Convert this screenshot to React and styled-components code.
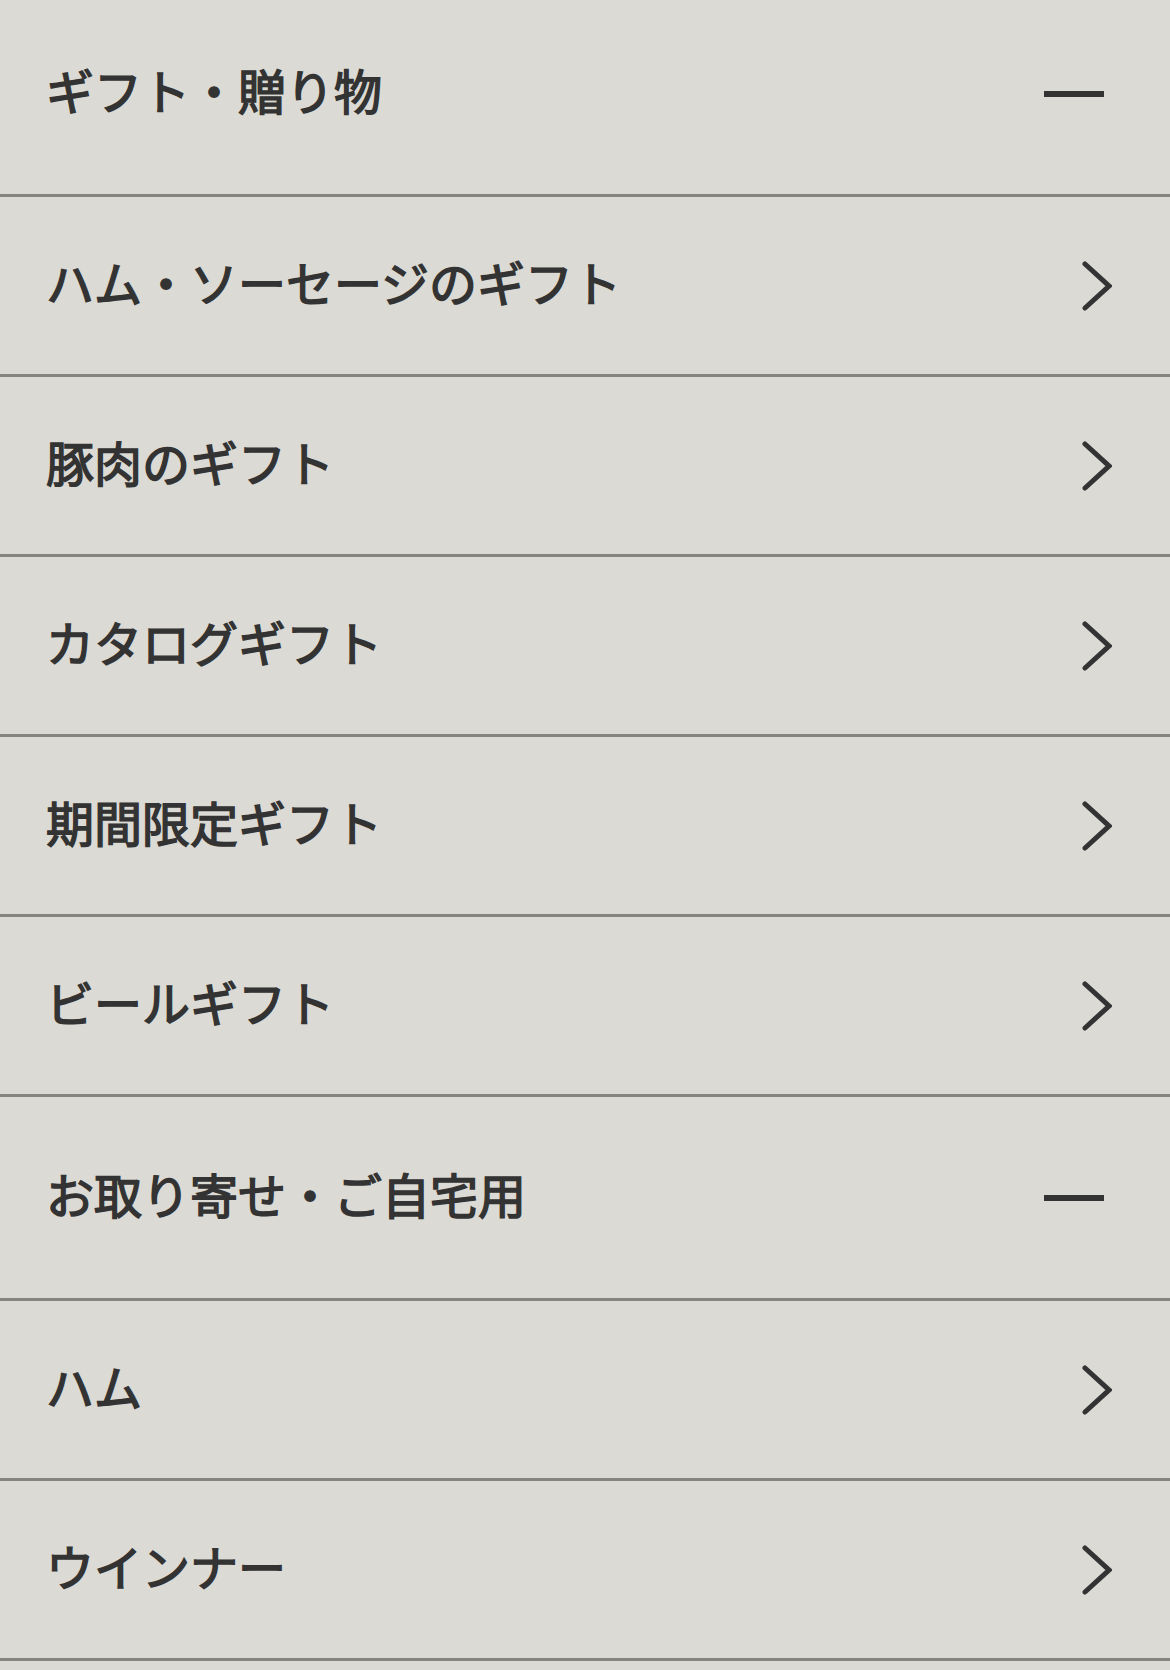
import React from 'react';
import styled, { createGlobalStyle } from 'styled-components';

const GlobalStyle = createGlobalStyle`
  html, body {
    margin: 0;
    padding: 0;
    background: #dbdad4;
  }
  body {
    font-family: "Noto Sans CJK JP", "Noto Sans", sans-serif;
    color: #333;
    overflow: hidden;
  }
`;

// the screenshot is scrolled a few pixels down
const Menu = styled.nav`
  margin-top: -7px;
  background: #dbdad4;
`;

const Row = styled.a`
  display: flex;
  align-items: center;
  justify-content: space-between;
  box-sizing: content-box;
  height: ${p => (p.$header ? '201px' : '177px')};
  padding: 0 58px 0 46px;
  border-bottom: 3px solid #858580;
  color: #333;
  text-decoration: none;
  cursor: pointer;
`;

// medium weight: regular glyphs thickened a little
const Label = styled.span`
  font-size: 48px;
  font-weight: 400;
  -webkit-text-stroke: 1.5px #333;
  line-height: 1;
  white-space: nowrap;
  margin-bottom: 10px;
`;

const IconSlot = styled.span`
  display: flex;
  align-items: center;
  justify-content: ${p => (p.$header ? 'flex-start' : 'flex-end')};
  width: 68px;
  flex: none;
`;

const Minus = styled.span`
  display: block;
  width: 60px;
  height: 6px;
  background: #333;
`;

const Chevron = () => (
  <svg width="30" height="50" viewBox="0 0 30 50" fill="none">
    <polyline
      points="3,3 27,25 3,47"
      stroke="#333"
      strokeWidth="5"
      strokeLinecap="round"
      strokeLinejoin="miter"
    />
  </svg>
);

const sections = [
  {
    title: 'ギフト・贈り物',
    items: [
      'ハム・ソーセージのギフト',
      '豚肉のギフト',
      'カタログギフト',
      '期間限定ギフト',
      'ビールギフト',
    ],
  },
  {
    title: 'お取り寄せ・ご自宅用',
    items: ['ハム', 'ウインナー'],
  },
];

export default function App() {
  return (
    <>
      <GlobalStyle />
      <Menu>
        {sections.map(section => (
          <React.Fragment key={section.title}>
            <Row $header>
              <Label>{section.title}</Label>
              <IconSlot $header>
                <Minus />
              </IconSlot>
            </Row>
            {section.items.map(item => (
              <Row key={item}>
                <Label>{item}</Label>
                <IconSlot>
                  <Chevron />
                </IconSlot>
              </Row>
            ))}
          </React.Fragment>
        ))}
      </Menu>
    </>
  );
}
